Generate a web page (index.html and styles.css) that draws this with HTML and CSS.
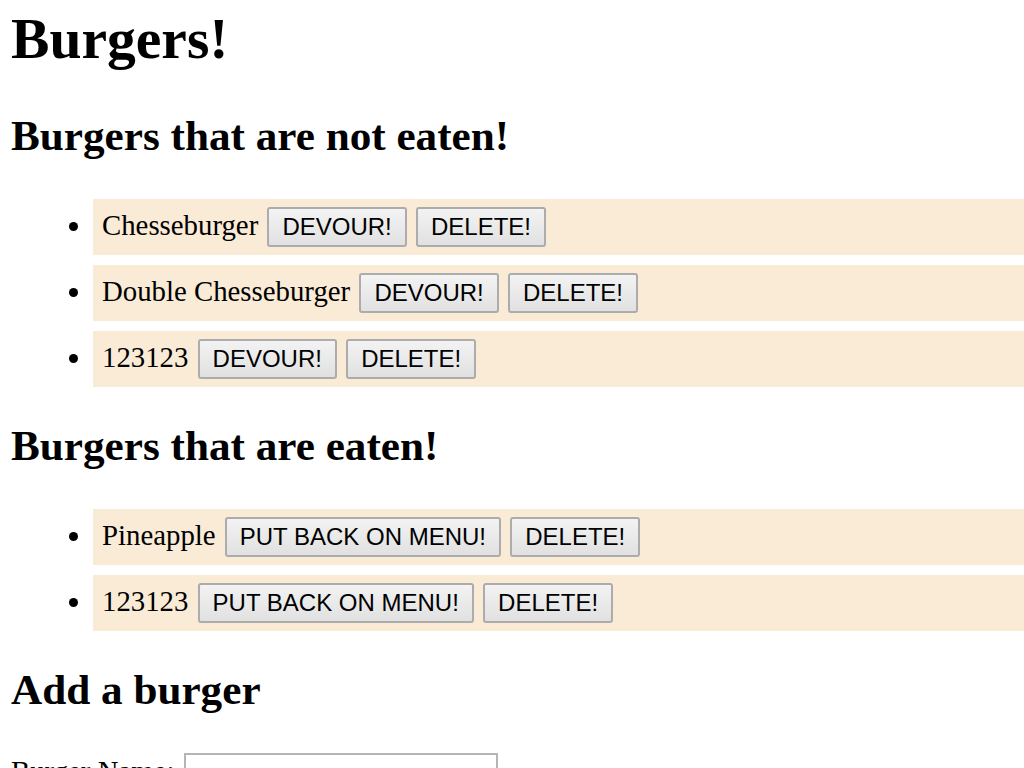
FILE: index.html
```html
<!DOCTYPE html>
<html lang="en">
<head>
<meta charset="utf-8">
<title>Burgers!</title>
<link rel="stylesheet" href="styles.css">
</head>
<body>
  <h1 class="title">Burgers!</h1>

  <h2 class="section-title">Burgers that are not eaten!</h2>
  <ul class="burger-list">
    <li class="burger">Chesseburger <button class="btn">DEVOUR!</button> <button class="btn">DELETE!</button></li>
    <li class="burger">Double Chesseburger <button class="btn">DEVOUR!</button> <button class="btn">DELETE!</button></li>
    <li class="burger">123123 <button class="btn">DEVOUR!</button> <button class="btn">DELETE!</button></li>
  </ul>

  <h2 class="section-title">Burgers that are eaten!</h2>
  <ul class="burger-list">
    <li class="burger">Pineapple <button class="btn">PUT BACK ON MENU!</button> <button class="btn">DELETE!</button></li>
    <li class="burger">123123 <button class="btn">PUT BACK ON MENU!</button> <button class="btn">DELETE!</button></li>
  </ul>

  <h2 class="section-title">Add a burger</h2>
  <form class="add-form">
    <label class="add-label" for="burger-name">Burger Name:</label>
    <input class="add-input" id="burger-name" type="text">
  </form>
</body>
</html>
```

FILE: styles.css
```css
html, body {
  background: #ffffff;
}

body {
  margin: 0;
  padding: 6px 0 0 11px;
  font-family: "Liberation Serif", "Times New Roman", serif;
  font-size: 28.8px;
  color: #000000;
}

.title {
  margin: 0 0 39px 0;
  font-size: 57.6px;
  line-height: 66px;
  font-weight: bold;
}

.section-title {
  margin: 34px 0 38px 0;
  font-size: 43.2px;
  line-height: 50px;
  font-weight: bold;
}

.burger-list {
  margin: 0;
  padding: 0 0 0 82px;
  list-style: disc;
}

.burger {
  background: #faebd7;
  padding: 8px 0 8px 9px;
  margin-bottom: 10px;
  line-height: 36px;
}

.burger:last-child {
  margin-bottom: 0;
}

.btn {
  font-family: "Liberation Sans", Arial, sans-serif;
  font-size: 24px;
  color: #000000;
  padding: 4px 13px;
  margin: 0 0 0 2px;
  border: 2px solid #acacac;
  border-radius: 3px;
  background: linear-gradient(#f3f3f3, #e1e1e1);
  line-height: 28px;
  vertical-align: baseline;
}

.add-form {
  margin: 0;
}

.add-label {
  font-size: 28.8px;
}

.add-input {
  width: 306px;
  height: 36px;
  border: 2px solid #b5b5b5;
  padding: 0 2px;
  margin: 0 0 0 2px;
  font-size: 24px;
  vertical-align: baseline;
}
```
